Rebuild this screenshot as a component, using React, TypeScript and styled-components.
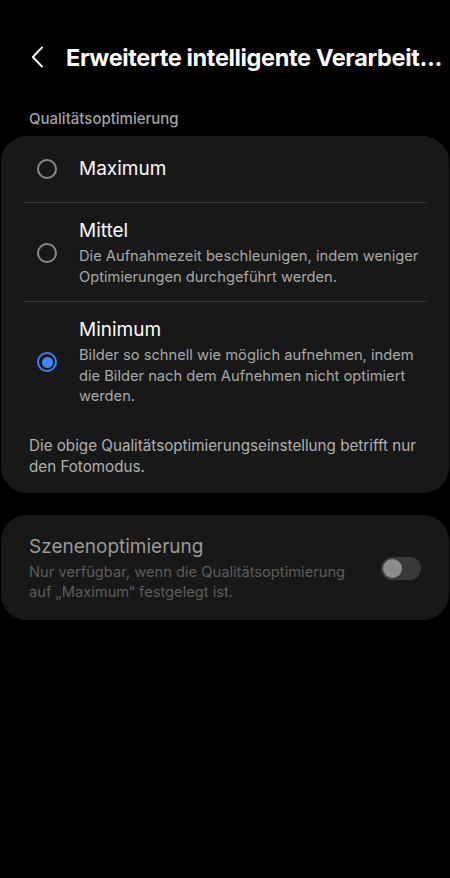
import styled, { createGlobalStyle } from "styled-components";

const GlobalStyle = createGlobalStyle`
  html, body {
    margin: 0;
    padding: 0;
    background: #000;
  }
  body {
    font-family: Inter, Roboto, "Noto Sans", sans-serif;
    color: #fafafa;
    -webkit-font-smoothing: antialiased;
  }
`;

const Screen = styled.div`
  width: 450px;
  min-height: 878px;
  background: #000;
  display: flex;
  flex-direction: column;
`;

const Header = styled.header`
  display: flex;
  align-items: center;
  gap: 22px;
  height: 44px;
  margin-top: 35px;
  padding-left: 31px;
`;

const BackBtn = styled.button`
  border: none;
  background: none;
  padding: 0;
  display: flex;
  align-items: center;
  color: #fff;
  cursor: pointer;
`;

const Title = styled.h1`
  margin: 0;
  font-size: 23.5px;
  font-weight: 700;
  letter-spacing: -0.35px;
  white-space: nowrap;
  color: #fff;
`;

const SectionLabel = styled.div`
  margin: 31px 0 0 29px;
  font-size: 15px;
  line-height: 18px;
  font-weight: 500;
  color: #a3a3a3;
`;

const Card = styled.section<{ $top: number }>`
  margin: ${(p) => p.$top}px 1px 0;
  background: #181818;
  border-radius: 26px;
`;

const Row = styled.div<{ $divider?: boolean; $minH?: number }>`
  margin: 0 22px;
  display: flex;
  align-items: center;
  gap: 22px;
  min-height: ${(p) => p.$minH ?? 0}px;
  padding: ${(p) => (p.$minH ? "0" : "16px 0 14px")};
  border-bottom: ${(p) => (p.$divider ? "1px solid #333" : "none")};
`;

const Radio = styled.span<{ $on?: boolean }>`
  flex: none;
  margin-left: 14px;
  width: 20px;
  height: 20px;
  border-radius: 50%;
  box-sizing: border-box;
  border: ${(p) => (p.$on ? "2.5px solid #3f80f4" : "2px solid #8a8a8a")};
  display: flex;
  align-items: center;
  justify-content: center;
  &::after {
    content: "";
    display: ${(p) => (p.$on ? "block" : "none")};
    width: 11px;
    height: 11px;
    border-radius: 50%;
    background: #4187fa;
  }
`;

const Texts = styled.div`
  display: flex;
  flex-direction: column;
  min-width: 0;
`;

const OptionTitle = styled.div<{ $dim?: boolean }>`
  font-size: 19px;
  line-height: 24px;
  color: ${(p) => (p.$dim ? "#9a9a9a" : "#fafafa")};
`;

const OptionDesc = styled.div<{ $dim?: boolean }>`
  margin-top: 3px;
  font-size: 14.7px;
  line-height: 20.5px;
  color: ${(p) => (p.$dim ? "#5c5c5c" : "#a8a8a8")};
`;

const Note = styled.p`
  margin: 14px 0 0;
  padding: 0 20px 16px 28px;
  font-size: 15.2px;
  line-height: 21px;
  color: #b0b0b0;
`;

const SwitchRow = styled.div`
  display: flex;
  align-items: center;
  justify-content: space-between;
  gap: 16px;
  padding: 20px 28px 17px;
`;

const Switch = styled.span`
  flex: none;
  width: 40px;
  height: 23px;
  border-radius: 12px;
  background: #3a3a3a;
  display: flex;
  align-items: center;
  padding-left: 2px;
  box-sizing: border-box;
  &::before {
    content: "";
    width: 19px;
    height: 19px;
    border-radius: 50%;
    background: #8c8c8c;
  }
`;

const options = [
  { title: "Maximum", desc: "", on: false },
  {
    title: "Mittel",
    desc: "Die Aufnahmezeit beschleunigen, indem weniger Optimierungen durchgeführt werden.",
    on: false,
  },
  {
    title: "Minimum",
    desc: "Bilder so schnell wie möglich aufnehmen, indem die Bilder nach dem Aufnehmen nicht optimiert werden.",
    on: true,
  },
];

export default function App() {
  return (
    <Screen>
      <GlobalStyle />
      <Header>
        <BackBtn aria-label="Zurück">
          <svg width="13" height="22" viewBox="0 0 13 22" fill="none">
            <path
              d="M11 1.5 1.8 11l9.2 9.5"
              stroke="currentColor"
              strokeWidth="1.8"
              strokeLinecap="round"
              strokeLinejoin="round"
            />
          </svg>
        </BackBtn>
        <Title>Erweiterte intelligente Verarbeit...</Title>
      </Header>
      <SectionLabel>Qualitätsoptimierung</SectionLabel>
      <Card $top={8}>
        {options.map((o, i) => (
          <Row
            key={o.title}
            $divider={i < options.length - 1}
            $minH={o.desc ? undefined : 66}
          >
            <Radio $on={o.on} />
            <Texts>
              <OptionTitle>{o.title}</OptionTitle>
              {o.desc && <OptionDesc>{o.desc}</OptionDesc>}
            </Texts>
          </Row>
        ))}
        <Note>
          Die obige Qualitätsoptimierungseinstellung betrifft nur den
          Fotomodus.
        </Note>
      </Card>
      <Card $top={22}>
        <SwitchRow>
          <Texts>
            <OptionTitle $dim>Szenenoptimierung</OptionTitle>
            <OptionDesc $dim>
              Nur verfügbar, wenn die Qualitätsoptimierung auf „Maximum“
              festgelegt ist.
            </OptionDesc>
          </Texts>
          <Switch />
        </SwitchRow>
      </Card>
    </Screen>
  );
}
